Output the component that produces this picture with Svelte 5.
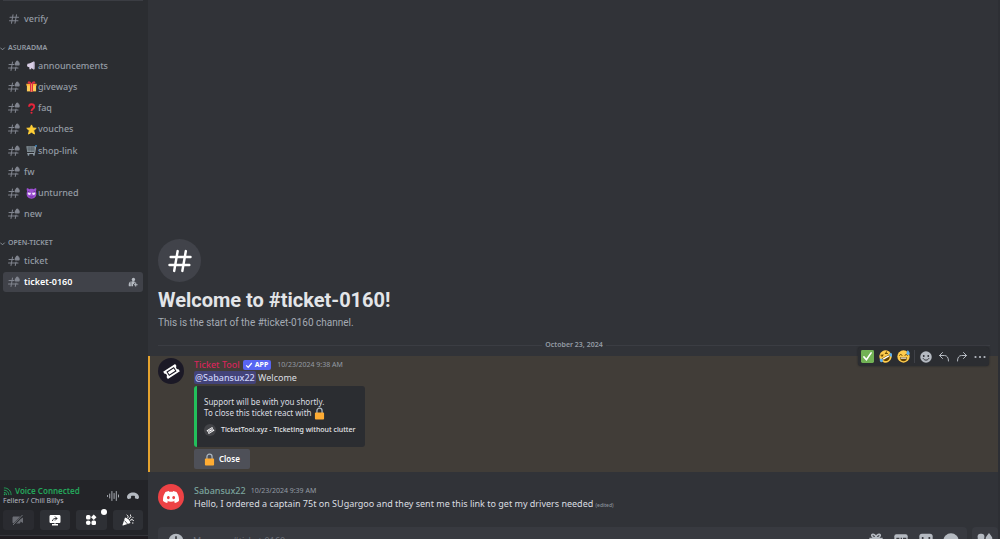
<script>
  const groups = [
    {
      name: 'ASURADMA',
      channels: [
        { name: 'announcements', emoji: 'horn' },
        { name: 'giveways', emoji: 'gift' },
        { name: 'faq', emoji: 'question' },
        { name: 'vouches', emoji: 'star' },
        { name: 'shop-link', emoji: 'cart' },
        { name: 'fw' },
        { name: 'unturned', emoji: 'devil' },
        { name: 'new' }
      ]
    },
    { name: 'OPEN-TICKET', channels: [{ name: 'ticket' }, { name: 'ticket-0160', active: true }] }
  ];
</script>

{#snippet hash(locked)}
  <svg class="hash" viewBox="0 0 24 24" aria-hidden="true">
    {#if locked}
      <g fill="none" stroke="currentColor" stroke-width="2.1" stroke-linecap="round">
        <path d="M9 4 6 21M16 14 14.500 21M2 9h10M1 16h19" />
      </g>
      <path fill="currentColor" d="M15.500 4.500V4a3 3 0 0 1 6 0v.5c1.200 0 1.800.6 1.800 1.500v3.500c0 .9-.6 1.500-1.500 1.500h-6.600c-.9 0-1.500-.6-1.500-1.500V6c0-.9.6-1.500 1.800-1.500Z" />
    {:else}
      <path fill="none" stroke="currentColor" stroke-width="2.1" stroke-linecap="round" d="M10 3.500 7 20.500M17 3.500 14 20.500M4 8.500h17M3 15.500h17" />
    {/if}
  </svg>
{/snippet}

{#snippet ticketLogo()}
  <svg class="ticket-logo" viewBox="0 0 24 24" aria-hidden="true">
    <g transform="rotate(-33 12 12)">
      <path fill="#fff" d="M3 6.500h18v3.200a2.400 2.400 0 0 0 0 4.600v3.200H3v-3.200a2.400 2.400 0 0 0 0-4.600Z" />
      <path fill="none" stroke="#1b1926" stroke-width="1.300" d="M7 9.500h10v5H7z" />
    </g>
  </svg>
{/snippet}

{#snippet lock()}
  <svg class="lock" viewBox="0 0 12 14" aria-hidden="true">
    <path d="M3.200 7V4a2.800 2.800 0 0 1 5.600 0v3" fill="none" stroke="#a9b4bd" stroke-width="1.400" />
    <rect x="1" y="6" width="10" height="7.500" rx="1" fill="#ffac33" />
  </svg>
{/snippet}

{#snippet emoji(kind)}
  <svg class="emoji" viewBox="0 0 36 36" aria-hidden="true">
    {#if kind === 'horn'}
      <path fill="#d9cfe6" d="M3 13 13 11 25 5c2-1 3 0 3 2v22c0 2-1 3-3 2l-8-5v4h-6v-6l-6-2c-2-3-2-6 0-9Z" /><path fill="#a99fbc" d="M25 5c4 3 4 23 0 26Z" />
    {:else if kind === 'gift'}
      <path fill="#fdcb58" d="M3 13h30v21H3z" /><path fill="#ffac33" d="M1 9h34v6H1z" /><path fill="#dd2e44" d="M13 7h10v28H13z" /><path fill="#fdcb58" d="M17 9h2v26h-2z" /><path fill="#dd2e44" d="M18 9C7 10 4 7 6 3s10-2 12 6c2-8 10-10 12-6s-1 7-12 6Z" />
    {:else if kind === 'question'}
      <path fill="none" stroke="#e5253b" stroke-width="6" d="M10 12c0-6 4-8 8-8 5 0 9 3 9 8 0 7-9 6-9 14" /><circle cx="18" cy="32" r="3.500" fill="#e5253b" />
    {:else if kind === 'star'}
      <path fill="#ffcf37" stroke="#ffcf37" stroke-width="3" stroke-linejoin="round" d="m18 3 4.500 10 11 1-8.300 7.500L28 33l-10-6-10 6 2.800-11.500L2.500 14l11-1Z" />
    {:else if kind === 'cart'}
      <path fill="#8b989f" d="M1 4h29l-3 19H4Z" /><path stroke="#414c54" stroke-width="2" d="M3 10h25M4 16h24M10 5v17M17 5v17M23 5v17" /><path fill="none" stroke="#a3afb8" stroke-width="3" d="M4 28h24l4-24" /><path stroke="#3b94d9" stroke-width="4" d="M30 3h6" /><circle cx="8" cy="32" r="3" fill="#8899a6" /><circle cx="26" cy="32" r="3" fill="#8899a6" />
    {:else if kind === 'devil'}
      <path fill="#9b4fd0" d="M3 1c4 0 6 2 8 3 5-2 9-2 14 0 2-1 4-3 8-3 2 4 0 8-1 10 6 13-2 24-14 24S-2 24 4 11C3 9 1 5 3 1Z" /><ellipse cx="11" cy="18" rx="5" ry="4.500" fill="#f3e8ff" /><ellipse cx="25" cy="18" rx="5" ry="4.500" fill="#f3e8ff" /><path fill="none" stroke="#4b1979" stroke-width="2" d="m6 11 8 4m16-4-8 4M12 28c4 2 8 2 12 0" />
    {:else if kind === 'check'}
      <rect width="36" height="36" rx="4" fill="#72b255" /><path fill="none" stroke="#fff" stroke-width="4.500" stroke-linecap="round" d="m8 19 7 8L28 8" />
    {:else if kind === 'rofl'}
      <g transform="rotate(-30 18 18)"><circle cx="18" cy="18" r="17" fill="#ffcc4d" /><path fill="#664500" d="M7 18h22c0 8-5 13-11 13S7 26 7 18Z" /><path fill="#fff" d="M9 19h18v4H9z" /><path fill="none" stroke="#664500" stroke-width="2.500" d="m8 8 6 3-6 3m20-6-6 3 6 3" /><path fill="#5dadec" d="M0 17c7-2 8 3 6 8-3 4-8 1-8-3Zm36 0c-7-2-8 3-6 8 3 4 8 1 8-3Z" /></g>
    {:else if kind === 'sweat'}
      <circle cx="18" cy="18" r="17" fill="#ffcc4d" /><path fill="#664500" d="M8 20h20c0 7-4 11-10 11S8 27 8 20Z" /><path fill="#fff" d="M10 21h16v3H10z" /><path fill="none" stroke="#664500" stroke-width="2.500" stroke-linecap="round" d="M7 15c1-4 6-4 7 0m8 0c1-4 6-4 7 0" /><path fill="#5dadec" d="M30 0c4 5 6 8 5 11-2 4-8 3-9-1 0-3 2-6 4-10Z" />
    {/if}
  </svg>
{/snippet}

<div class="app">
  <aside>
    <nav>
      <div class="rule"></div>
      <a class="channel first" href="#verify">{@render hash(false)}<span>verify</span></a>
      {#each groups as g}
        <section>
          <h2><svg viewBox="0 0 8 8" aria-hidden="true"><path d="m1.500 3 2.500 2.500L6.500 3" fill="none" stroke="currentColor" /></svg>{g.name}</h2>
          <ul>
            {#each g.channels as c}
              <li>
                <a class="channel" class:active={c.active} href="#{c.name}">
                  {@render hash(true)}
                  {#if c.emoji}{@render emoji(c.emoji)}{/if}
                  <span>{c.name}</span>
                  {#if c.active}
                    <svg class="invite" viewBox="0 0 24 24" aria-hidden="true"><circle cx="13" cy="6" r="4" fill="currentColor" /><path fill="currentColor" d="M8 11c4-2 9-1 11 3h-4v3h-3v5H8ZM6 10l1 12H2c-1-5 0-9 4-12Z" /><path stroke="currentColor" stroke-width="2.500" d="M18.500 14v9M14 18.500h9" /></svg>
                  {/if}
                </a>
              </li>
            {/each}
          </ul>
        </section>
      {/each}
    </nav>

    <div class="voice">
      <div class="voice-top">
        <div>
          <strong>
            <svg viewBox="0 0 20 20" aria-hidden="true"><g fill="none" stroke="currentColor" stroke-width="2"><path d="M2 2c10 0 16 7 16 16M2 7c7 0 11 5 11 11M2 12c4 0 6 2 6 6" /></g><circle cx="3.500" cy="16.500" r="1.800" fill="currentColor" /></svg>
            Voice Connected
          </strong>
          <small>Fellers / Chill Billys</small>
        </div>
        <button class="plain" aria-label="Noise suppression"><svg viewBox="0 0 24 24"><path stroke="currentColor" stroke-width="1.800" stroke-linecap="round" d="M1 11v2M5.400 8v8M9.800 3v18M14.200 7v10M18.600 3v18M23 10v4" /></svg></button>
        <button class="plain" aria-label="Disconnect"><svg viewBox="0 0 24 24"><path fill="currentColor" d="M0 15C0 8 6 5 12 5s12 3 12 10l-1 2c-.5 1-1 1-2 .800l-4-1c-1-.3-1.200-1-1.200-2V12c-2-.7-5.600-.7-7.600 0v2.800c0 1-.2 1.700-1.200 2l-4 1c-1 .2-1.500.2-2-.8Z" /></svg></button>
      </div>
      <div class="voice-actions">
        <button class="off" aria-label="Camera"><svg viewBox="0 0 24 24"><path fill="currentColor" d="M3 5h11c2 0 3 1 3 3v2l5-3v11l-5-3c0 3-1 4-3 4H4c-2 0-3-1-3-3V8c0-2 1-3 2-3Z" /><path stroke="#2b2d31" stroke-width="4" d="M2 23 22 2" /><path stroke="currentColor" stroke-width="2" d="M2 22 21 2" /></svg></button>
        <button aria-label="Share screen"><svg viewBox="0 0 24 24"><path fill="currentColor" d="M4 2h16c2 0 3 1 3 3v10c0 2-1 3-3 3h-7v2h5v3H6v-3h5v-2H4c-2 0-3-1-3-3V5c0-2 1-3 3-3Z" /><path fill="none" stroke="#2b2d31" stroke-width="2" d="M7 14c0-4 3-5 9-5m-4-4 4 4-4 4" /></svg></button>
        <button aria-label="Activities"><svg viewBox="0 0 24 24"><g fill="currentColor"><rect x="2" y="2" width="9" height="9" rx="3" /><path d="m17.500 1 5.500 5.500-5.500 5.500L12 6.500Z" /><circle cx="6.500" cy="17.500" r="4.700" /><rect x="13" y="13" width="9" height="9" rx="3" /></g></svg><i></i></button>
        <button aria-label="Soundboard"><svg viewBox="0 0 24 24"><path fill="currentColor" d="M6 7c5 1 10 6 11 11L2 23c-1 0-1-1-1-1Z" /><path stroke="#2b2d31" stroke-width="1.500" d="m5 13 6 7" /><path fill="none" stroke="currentColor" stroke-width="2" stroke-linecap="round" d="M10 2c3 2 3 4 1 6M14 10l4-5M16 13c3-3 5-2 7 0M17 2v1M22 7l-1 1M22 18h-1" /></svg></button>
      </div>
    </div>
    <div class="user"></div>
  </aside>

  <main>
    <div class="log">
      <header>
        <div class="badge">{@render hash(false)}</div>
        <h1>Welcome to #ticket-0160!</h1>
        <p>This is the start of the #ticket-0160 channel.</p>
      </header>
      <div class="divider"><span>October 23, 2024</span></div>

      <article class="mentioned">
        <div class="avatar dark">{@render ticketLogo()}</div>
        <div class="content">
          <div class="meta">
            <b class="bot">Ticket Tool</b>
            <span class="tag"><svg viewBox="0 0 10 10" aria-hidden="true"><path d="m1.500 5.500 2.500 2.500 4.500-5.500" fill="none" stroke="#fff" stroke-width="1.600" /></svg>APP</span>
            <time>10/23/2024 9:38 AM</time>
          </div>
          <p><a class="mention" href="#user">@Sabansux22</a> Welcome</p>
          <div class="embed">
            <p>Support will be with you shortly.<br />To close this ticket react with {@render lock()}</p>
            <footer><span>{@render ticketLogo()}</span>TicketTool.xyz - Ticketing without clutter</footer>
          </div>
          <button class="close">{@render lock()}Close</button>
        </div>
        <div class="toolbar">
          <button aria-label="React with check mark">{@render emoji('check')}</button>
          <button aria-label="React with rolling laughter">{@render emoji('rofl')}</button>
          <button aria-label="React with sweat smile">{@render emoji('sweat')}</button>
          <hr />
          <button aria-label="Add reaction"><svg viewBox="0 0 24 24"><circle cx="12" cy="12" r="11.500" fill="currentColor" /><circle cx="7.500" cy="10" r="1.800" fill="#2b2d31" /><circle cx="16.500" cy="10" r="1.800" fill="#2b2d31" /><path d="M6 14.500c3 5 9 5 12 0" fill="none" stroke="#2b2d31" stroke-width="2" /></svg></button>
          <button aria-label="Reply"><svg viewBox="0 0 24 24"><path d="M9 3 3 9l6 6M3 9h10c5 0 8 4 8 11" fill="none" stroke="currentColor" stroke-width="2" stroke-linecap="round" /></svg></button>
          <button aria-label="Forward"><svg viewBox="0 0 24 24"><path d="m15 3 6 6-6 6M21 9H11c-5 0-8 4-8 11" fill="none" stroke="currentColor" stroke-width="2" stroke-linecap="round" /></svg></button>
          <button aria-label="More"><svg viewBox="0 0 24 24"><g fill="currentColor"><circle cx="3" cy="12" r="2.200" /><circle cx="12" cy="12" r="2.200" /><circle cx="21" cy="12" r="2.200" /></g></svg></button>
        </div>
      </article>

      <article>
        <div class="avatar red"><svg viewBox="0 0 24 18" aria-hidden="true"><path fill="#fff" d="M20.300 1.500A20 20 0 0 0 15.400 0l-.7 1.300a18 18 0 0 0-5.400 0L8.600 0a20 20 0 0 0-4.900 1.500C.6 6.100-.3 10.500.1 14.900A20 20 0 0 0 6.100 18l1.500-2.100-2-.9.5-.4a14 14 0 0 0 11.800 0l.5.400-2 .9L17.900 18a20 20 0 0 0 6-3.100c.5-5.100-.8-9.500-3.600-13.400ZM8 12.200c-1.200 0-2.100-1.100-2.100-2.400S6.800 7.400 8 7.400s2.200 1.100 2.100 2.400c0 1.300-.9 2.400-2.100 2.400Zm8 0c-1.200 0-2.100-1.100-2.100-2.400s.9-2.400 2.100-2.400 2.200 1.100 2.100 2.400c0 1.300-.9 2.400-2.100 2.400Z" /></svg></div>
        <div class="content">
          <div class="meta"><b class="member">Sabansux22</b><time>10/23/2024 9:39 AM</time></div>
          <p>Hello, I ordered a captain 75t on SUgargoo and they sent me this link to get my drivers needed <small>(edited)</small></p>
        </div>
      </article>
    </div>

    <div class="composer">
      <div class="box">
        <button aria-label="Add attachment"><svg viewBox="0 0 24 24"><circle cx="12" cy="12" r="11" fill="currentColor" /><path d="M12 5v14M5 12h14" stroke="#383a40" stroke-width="2.500" /></svg></button>
        <input type="text" aria-label="Message" placeholder="Message #ticket-0160" />
        <button aria-label="Send a gift"><svg viewBox="0 0 24 24"><path fill="none" stroke="currentColor" stroke-width="2.500" d="M12 7C5 8 4 1 8 2c2 0 4 3 4 5 0-2 2-5 4-5 4-1 3 6-4 5Z" /><path fill="currentColor" d="M2 7h20v5H2zM3 13h18v9H3z" /></svg></button>
        <button aria-label="GIFs"><svg viewBox="0 0 24 24"><rect x="2" y="2" width="20" height="20" rx="3" fill="currentColor" /><path d="M9.500 8H6v8h3.500v-4M12.500 7v10M16 17V8h4M16 12h3" fill="none" stroke="#383a40" stroke-width="2" /></svg></button>
        <button aria-label="Stickers"><svg viewBox="0 0 24 24"><rect x="2" y="1" width="20" height="22" rx="4" fill="currentColor" /><path d="M7 6v5M17 6v5M7 15c2 3 8 3 10 0" fill="none" stroke="#383a40" stroke-width="2.500" /></svg></button>
        <button aria-label="Emoji"><svg viewBox="0 0 24 24"><circle cx="12" cy="12" r="11.500" fill="currentColor" /><path d="M6 14c3 5 9 5 12 0M8 9v2M16 9v2" fill="none" stroke="#383a40" stroke-width="2" /></svg></button>
      </div>
      <div class="box apps"><button aria-label="Apps"><svg viewBox="0 0 24 24"><g fill="currentColor"><rect x="1" y="1" width="10" height="10" rx="4" /><path d="M18 0c3 4 5 6 5 8 0 5-10 5-10 0 0-2 2-4 5-8Z" /><circle cx="6" cy="18" r="5" /><rect x="13" y="13" width="10" height="10" rx="3" /></g></svg></button></div>
    </div>
  </main>
</div>

<style>
  :global(body) { margin: 0; background: #313338; }
  .app { display: grid; grid-template-columns: 148px minmax(0, 1fr); height: 100vh; overflow: hidden; font: 9px/14px "Noto Sans", sans-serif; color: #dbdee1; }
  h1, h2, p, ul { margin: 0; padding: 0; font-weight: 400; }
  ul { list-style: none; }
  svg { display: block; flex: none; }
  a { color: inherit; text-decoration: none; }
  button { display: flex; align-items: center; justify-content: center; padding: 0; border: 0; background: none; color: #b5bac1; font: inherit; }

  aside { display: flex; flex-direction: column; min-height: 0; background: #2b2d31; }
  nav { flex: 1; min-height: 0; padding: 0 5px 0 3px; overflow: hidden; }
  .rule { height: 1px; background: #3b3d43; }
  .channel { display: flex; align-items: center; height: 20px; padding: 0 5px; border-radius: 3px; color: #949ba4; font-weight: 500; }
  .channel.first { margin-top: 8px; }
  .channel span { flex: 1; }
  .hash { width: 12px; height: 12px; margin-right: 4px; color: #80848e; }
  .emoji { width: 11px; height: 11px; margin: 0 1px 0 2px; }
  .active { background: #404249; color: #fff; font-weight: 600; }
  .invite { width: 10px; height: 10px; color: #b5bac1; }
  h2 { display: flex; align-items: center; height: 14px; margin-left: -4px; font-size: 7px; font-weight: 600; color: #949ba4; }
  h2 svg { width: 7px; height: 7px; margin-right: 2px; }
  section { padding-top: 12px; }
  section + section { padding-top: 11px; }
  ul { display: grid; grid-auto-rows: minmax(21px, 1fr); }
  section:nth-of-type(1) ul { height: 170px; }
  li { display: grid; align-items: center; }

  .voice { padding: 3px 5px 5px 3px; background: #232428; }
  .voice-top { display: flex; align-items: center; gap: 8px; height: 26px; padding: 0 4px 1px 0; }
  .voice-top > div { flex: 1; line-height: 10px; }
  .voice strong { display: flex; align-items: center; gap: 3px; font-size: 8px; font-weight: 600; color: #23a55a; white-space: nowrap; }
  .voice strong svg { width: 9px; height: 9px; }
  .voice small { display: block; font-size: 7px; color: #b5bac1; }
  .plain svg { width: 12px; height: 12px; }
  .voice-actions { display: grid; grid-template-columns: repeat(4, 1fr); gap: 6px; }
  .voice-actions button { position: relative; height: 20px; border-radius: 3px; background: #2e3035; color: #fff; }
  .voice-actions svg { width: 12px; height: 12px; }
  .voice-actions .off { background: #2a2b30; color: #6b6d74; }
  .voice-actions i { position: absolute; top: -1px; right: 0; width: 6px; height: 6px; border-radius: 50%; background: #fff; }
  .user { height: 3px; border-top: 1px solid #34353a; background: #1f1c20; }

  main { display: flex; flex-direction: column; min-width: 0; min-height: 0; background: #313338; border-right: 2px solid #2d2f34; }
  .log { display: flex; flex: 1; flex-direction: column; justify-content: flex-end; min-height: 0; padding-bottom: 15px; }
  header { padding: 0 10px; }
  .badge { display: grid; place-items: center; width: 43px; height: 43px; border-radius: 50%; background: #41434a; }
  .badge .hash { width: 28px; height: 28px; margin: 0; color: #fff; }
  h1 { margin-top: 6px; font: 700 20px/24px Roboto, sans-serif; color: #e3e5e8; }
  header p { margin-top: 4px; font: 10px/14px Roboto, sans-serif; color: #a5abb4; }
  .divider { display: flex; align-items: center; gap: 3px; height: 12px; margin: 9px 8px 5px 10px; font-size: 7px; font-weight: 600; color: #949ba4; }
  .divider::before, .divider::after { content: ""; flex: 1; height: 1px; background: #3b3d43; }
  article { position: relative; display: flex; gap: 10px; padding: 2px 10px 0; }
  article + article { margin-top: 10px; }
  .mentioned { padding: 2px 10px 3px 8px; border-left: 2px solid #e5a32e; background: #413d38; }
  .avatar { display: grid; flex: none; place-items: center; width: 26px; height: 26px; border-radius: 50%; }
  .dark { background: #1b1926; }
  .dark :global(svg) { width: 19px; height: 19px; }
  .red { background: #ed4245; }
  .red svg { width: 16px; height: 12px; }
  .content { flex: 1; min-width: 0; }
  .meta { display: flex; align-items: center; height: 13px; line-height: 13px; }
  .meta b { font-weight: 500; }
  .bot { color: #d7265c; }
  .member { color: #7ba39c; }
  .tag { display: flex; align-items: center; gap: 2px; height: 10px; margin: 0 6px 0 3px; padding: 0 3px 0 2px; border-radius: 2px; background: #5865f2; color: #fff; font-size: 7px; font-weight: 700; }
  .tag svg { width: 8px; height: 8px; }
  time { font-size: 7px; color: #949ba4; }
  .member + time { margin-left: 5px; }
  .mention { padding: 0 1px; border-radius: 2px; background: #434379; color: #cdd2fa; font-weight: 500; }
  .content > p small { font-size: 5px; color: #949ba4; }
  .embed { width: fit-content; box-sizing: border-box; margin-top: 1px; padding: 10px 9px 11px 7px; border-left: 3px solid #22bf5b; border-radius: 3px; background: #2b2d31; }
  .embed p { font-size: 8px; line-height: 11px; }
  .lock { display: inline-block; width: 11px; height: 13px; margin: -3px 0; vertical-align: middle; }
  .embed footer { display: flex; align-items: center; gap: 5px; margin-top: 6px; font-size: 7px; font-weight: 500; line-height: 12px; color: #e6e8eb; }
  .embed footer span { display: grid; place-items: center; width: 12px; height: 12px; border-radius: 50%; background: #424347; }
  .embed .ticket-logo { width: 9px; height: 9px; }
  .close { gap: 4px; height: 20px; margin-top: 2px; padding: 0 10px; border-radius: 2px; background: #4e5058; color: #fff; font-size: 8px; font-weight: 600; }
  .toolbar { position: absolute; top: -9px; right: 9px; display: flex; align-items: center; gap: 2px; height: 19px; padding: 0 1px; border-radius: 3px; background: #2b2d31; box-shadow: 0 0 2px #1e1f22; }
  .toolbar button { width: 16px; height: 16px; }
  .toolbar svg { width: 13px; height: 13px; margin: 0; }
  .toolbar button > svg:not(.emoji) { width: 12px; height: 12px; }
  .toolbar hr { width: 1px; height: 13px; margin: 0 1px; border: 0; background: #3f4147; }

  .composer { display: flex; flex: none; gap: 5px; height: 27px; margin: 0 0 -15px 10px; }
  .box { display: flex; flex: 1; align-items: center; gap: 9px; padding: 0 8px 0 10px; border-radius: 4px; background: #383a40; }
  .box svg { width: 16px; height: 16px; }
  .box input { flex: 1; min-width: 0; padding: 0; border: 0; outline: 0; background: none; color: #dbdee1; font: inherit; }
  .box input::placeholder { color: #6d717a; opacity: 1; }
  .apps { flex: none; padding: 0 5px; }
</style>
